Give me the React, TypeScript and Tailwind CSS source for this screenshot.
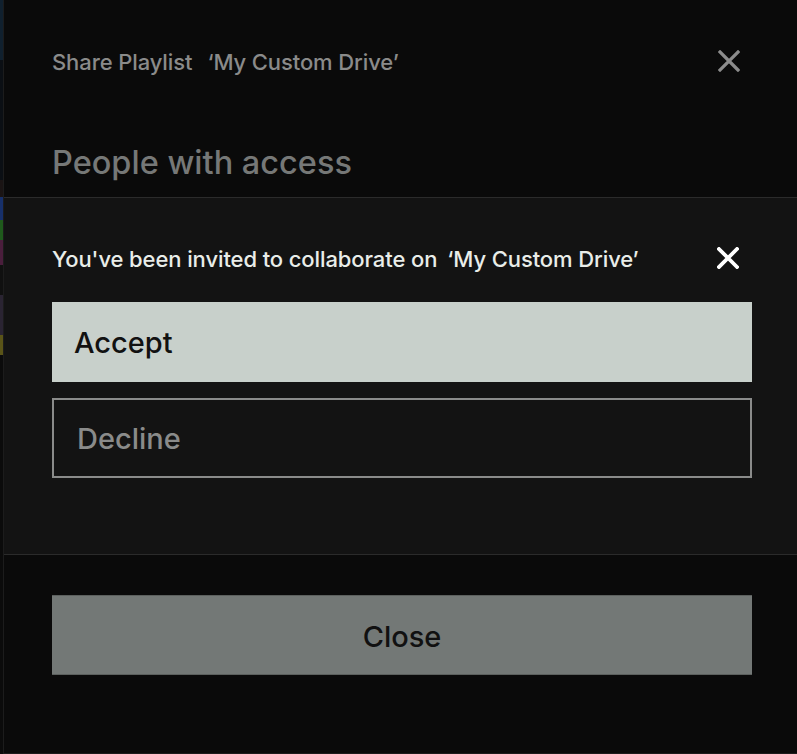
import React from "react";

function XIcon({ className, strokeWidth = 2.6 }: { className?: string; strokeWidth?: number }) {
  return (
    <svg viewBox="0 0 22 22" className={className} fill="none" stroke="currentColor" strokeWidth={strokeWidth} strokeLinecap="square">
      <path d="M2 2 L20 20 M20 2 L2 20" />
    </svg>
  );
}

export default function App() {
  return (
    <div className="flex h-[754px] w-full bg-[#0a0a0a]" style={{ fontFamily: "Inter, 'Liberation Sans', sans-serif" }}>
      {/* sliver of background content behind the dialog */}
      <div className="flex w-[3px] flex-col">
        <div className="h-[60px] bg-[#10202e]" />
        <div className="h-[120px] bg-[#0b0f14]" />
        <div className="h-[17px] bg-[#1a1414]" />
        <div className="h-[23px] bg-[#17306a]" />
        <div className="h-[20px] bg-[#1f5a1c]" />
        <div className="h-[25px] bg-[#4a1e3c]" />
        <div className="h-[30px] bg-[#101010]" />
        <div className="h-[40px] bg-[#2a2432]" />
        <div className="h-[20px] bg-[#5a5418]" />
        <div className="flex-1 bg-[#0b0b0b]" />
      </div>

      <div className="flex flex-1 flex-col border-l border-b border-[#1c1c1c] bg-[#0a0a0a]">
        {/* header */}
        <div className="mt-[48px] flex h-[26px] items-center justify-between pl-[48px] pr-[57px]">
          <div className="flex items-center gap-[15px] pt-[2px] text-[22px] font-medium leading-[26px] tracking-[-0.1px] text-[#8a8b8a]">
            <span>Share Playlist</span>
            <span>‘My Custom Drive’</span>
          </div>
          <XIcon className="h-[22px] w-[22px] text-[#8c8c8c]" strokeWidth={3.2} />
        </div>

        <h2 className="mt-[69px] pl-[48px] text-[32.5px] font-medium leading-[40px] text-[#767877]">People with access</h2>

        {/* invite panel */}
        <div className="mt-[14px] border-y border-[#2b2b2b] bg-[#131313] pb-[76px] pl-[48px] pr-[45px] pt-[47px]">
          <div className="flex h-[26px] items-center justify-between">
            <div className="flex items-center gap-[10px] pt-[1px] text-[22px] font-medium leading-[26px] tracking-[-0.1px] text-[#e9ede9]">
              <span>You've been invited to collaborate on</span>
              <span>‘My Custom Drive’</span>
            </div>
            <XIcon className="mr-[13px] h-[22px] w-[22px] text-white" strokeWidth={3.8} />
          </div>

          <button className="mt-[31px] flex h-[80px] w-full items-center bg-[#c8d0cb] pl-[22px] pt-[2px] text-[29px] font-medium text-[#111111]">
            Accept
          </button>
          <button className="mt-[16px] flex h-[80px] w-full items-center border-2 border-[#8a8b8a] pl-[23px] pt-[2px] text-[29px] font-medium text-[#8a8b8a]">
            Decline
          </button>
        </div>

        <div className="mt-[40px] pl-[48px] pr-[45px]">
          <button className="flex h-[80px] w-full items-center justify-center border-y border-[#5c605e] bg-[#737876] pt-[3px] text-[29px] font-medium text-[#111111]">
            Close
          </button>
        </div>
      </div>
    </div>
  );
}
